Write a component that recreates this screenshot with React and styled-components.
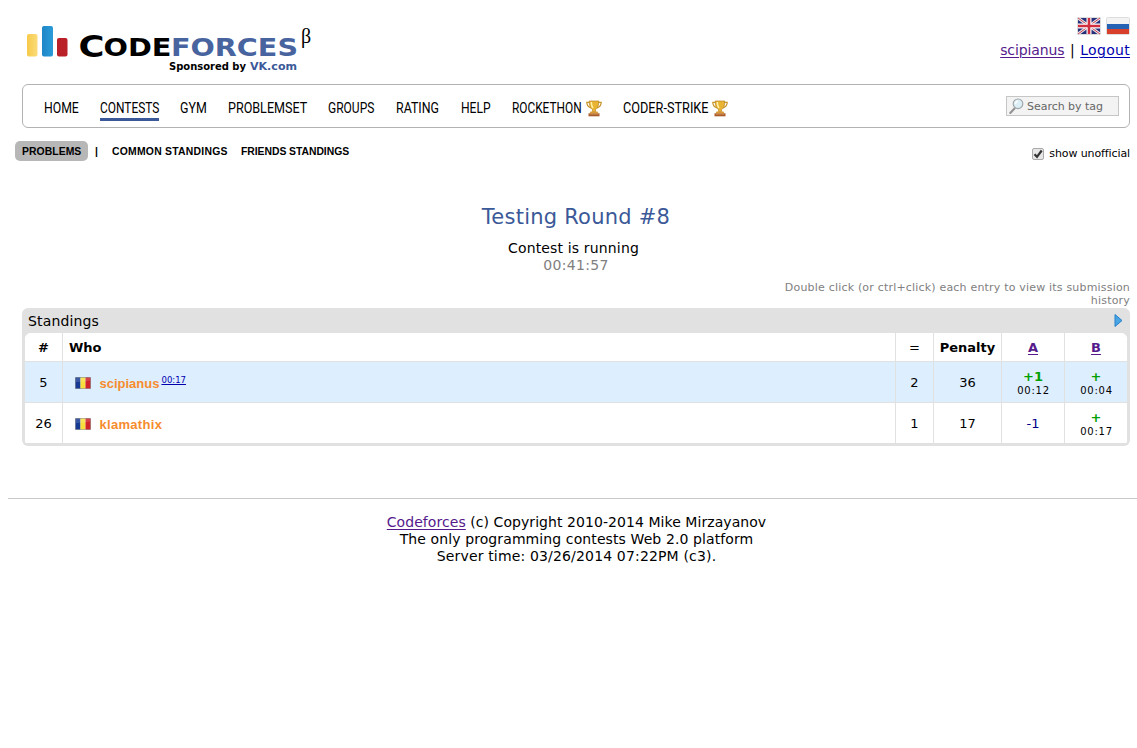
import React from "react";
import styled, { createGlobalStyle } from "styled-components";

const Global = createGlobalStyle`
  * { box-sizing: border-box; }
  body { margin: 0; background: #fff; color: #000; font: 14px/17px Verdana, "DejaVu Sans", sans-serif; overflow: hidden; }
`;
const Page = styled.div`width: 1137px; height: 748px; overflow: hidden;`;
const Header = styled.header`display: flex; justify-content: space-between; height: 84px; padding: 0 7px 0 22px;`;
const Account = styled.div`display: flex; flex-direction: column; align-items: flex-end; padding-top: 17px;`;
const Flags = styled.div`display: flex; gap: 5px; height: 25px;`;
const UserLinks = styled.div`display: flex; gap: 5.5px; white-space: pre;`;
const Link = styled.a`
  color: ${(p) => (p.$fresh ? "#0000b0" : "#551a8b")};
  text-decoration: underline; text-decoration-thickness: 1px; text-underline-offset: 2px;
  letter-spacing: ${(p) => p.$ls || 0}px;
`;
const Menu = styled.nav`
  display: flex; justify-content: space-between; height: 44px; margin: 0 7px 0 22px; padding: 11px 10px 0 21px;
  border: 1px solid #b2b2b2; border-radius: 6px;
`;
const MenuItems = styled.div`display: flex; gap: 21px; padding-top: 1px;`;
const MenuItem = styled.div`
  display: flex; justify-content: space-between; width: ${(p) => p.$w}px; height: 24px;
  border-bottom: ${(p) => (p.$active ? "3px solid #3b5998" : "0")};
`;
const MenuText = styled.span`
  display: block; width: 0; font: 15.5px/23px Roboto, sans-serif; white-space: nowrap;
  transform: scaleX(${(p) => p.$s}); transform-origin: 0 0;
`;
const Search = styled.div`
  display: flex; align-items: center; gap: 3px; width: 113px; height: 20px; padding-left: 2px;
  border: 1px solid #c6c6c6; background: #f3f3f3; color: #666; font-size: 11px; letter-spacing: -0.03px; white-space: nowrap;
`;
const SubBar = styled.div`display: flex; justify-content: space-between; height: 75px; padding: 13px 7px 0 15px;`;
const SubMenu = styled.div`display: flex; font: bold 10.4px/20px "Liberation Sans", Arial, sans-serif; white-space: nowrap;`;
const SubItem = styled.span`
  width: ${(p) => p.$w}px; height: 20px; padding: 1px 0 0 ${(p) => p.$pad || 0}px; border-radius: 5px;
  background: ${(p) => (p.$active ? "#b7b7b7" : "transparent")}; letter-spacing: ${(p) => p.$ls || 0}px;
`;
const Unofficial = styled.label`display: flex; gap: 5px; height: 24px; padding-top: 4px; font-size: 11px; letter-spacing: -0.11px; white-space: nowrap;`;
const CheckBox = styled.span`
  display: flex; width: 12px; height: 12px; margin-top: 3px; border: 1px solid #aaa; border-radius: 2px; background: #e6e6e6;
`;
const Contest = styled.section`height: 78px; margin-right: 7px; padding-left: 22px; text-align: center;`;
const Title = styled.h1`margin: 0 0 9px; font-size: 21px; line-height: 28px; font-weight: 400; color: #3b5998; letter-spacing: 0.23px;`;
const Status = styled.div`
  color: ${(p) => (p.$muted ? "#808080" : "#000")}; letter-spacing: ${(p) => p.$ls || 0}px;
  padding-right: ${(p) => (p.$muted ? 0 : 5)}px;
`;
const Hint = styled.div`
  width: 360px; height: 27px; margin: 0 7px 0 auto; color: #808080; text-align: right;
  font-size: 11px; line-height: 13px; letter-spacing: 0.19px;
`;
const Standings = styled.section`
  height: 138px; margin: 0 7px 0 22px; padding: 0 3px 3px; border-radius: 6px; background: #e1e1e1;
`;
const Caption = styled.div`display: flex; justify-content: space-between; height: 25px; padding: 5px 4px 0 3px; letter-spacing: 0.15px;`;
const Grid = styled.div`border-radius: 6px 6px 2px 2px; overflow: hidden; background: #fff;`;
const Row = styled.div`
  display: grid; grid-template-columns: 37px 833px 38px 68px 63px 1fr; height: ${(p) => p.$h}px;
  background: ${(p) => (p.$mine ? "#ddeeff" : "#fff")}; font-size: 13px;
  & + & { border-top: 1px solid #e1e1e1; }
`;
const Cell = styled.div`
  display: flex; flex-direction: ${(p) => (p.$stack ? "column" : "row")}; align-items: center;
  justify-content: ${(p) => (p.$left ? "flex-start" : "center")};
  padding: ${(p) => (p.$stack ? "2px" : "0")} 0 0 ${(p) => p.$left || 0}px; font-weight: ${(p) => (p.$bold ? 700 : 400)};
  color: ${(p) => p.$color || "#000"}; line-height: 15px;
  & + & { border-left: 1px solid #e1e1e1; }
`;
const Points = styled.b`height: 14px; color: #00a000; font-size: 13px; line-height: 14px;`;
const Time = styled.span`font-size: 10px; line-height: 13px; letter-spacing: 0.75px; padding-left: 1px;`;
const Handle = styled.b`
  margin: 2px 0 0 8.5px; color: #f68c2e; font: bold 13px/15px "Liberation Sans", Arial, sans-serif; letter-spacing: ${(p) => p.$ls}px;
`;
const VirtualTime = styled.a`margin: -4px 0 0 2px; color: #0000b0; font-size: 8.5px; line-height: 11px; text-decoration: underline; text-underline-offset: 1px;`;
const Footer = styled.footer`
  margin: 52px 0 0 8px; padding: 15px 0 0 8px; border-top: 1px solid #c8c8c8; text-align: center; white-space: nowrap;
`;
const FootLine = styled.div`letter-spacing: ${(p) => p.$ls || 0}px;`;

const Logo = () => (
  <svg width="300" height="84" viewBox="22 0 300 84">
    <defs>
      <linearGradient id="ly"><stop stopColor="#f7c948" /><stop offset="1" stopColor="#fbdc7a" /></linearGradient>
      <linearGradient id="lb"><stop stopColor="#1d86c7" /><stop offset="1" stopColor="#2b9bd8" /></linearGradient>
    </defs>
    <rect x="27" y="34" width="10.5" height="22.5" rx="2" fill="url(#ly)" />
    <rect x="42" y="26" width="11" height="30.5" rx="2" fill="url(#lb)" />
    <rect x="57" y="38" width="10.5" height="18.5" rx="2" fill="#b92027" />
    <g fontFamily="'DejaVu Sans', sans-serif" fontWeight="700">
      <text x="78.5" y="56.5" fontSize="30" textLength="26" lengthAdjust="spacingAndGlyphs">C</text>
      <text x="103.5" y="56.3" fontSize="25" textLength="68" lengthAdjust="spacingAndGlyphs">ODE</text>
      <text x="171" y="56.3" fontSize="25" textLength="127" lengthAdjust="spacingAndGlyphs" fill="#48649f">FORCES</text>
    </g>
    <text x="301" y="43" fontSize="20" fontFamily="'Liberation Serif', serif">β</text>
    <g fontFamily="'DejaVu Sans', sans-serif" fontWeight="700" fontSize="10.5">
      <text x="169" y="69.5" textLength="77" lengthAdjust="spacingAndGlyphs">Sponsored by</text>
      <text x="250" y="70" fontSize="11" textLength="47" lengthAdjust="spacingAndGlyphs" fill="#3b5998">VK.com</text>
    </g>
  </svg>
);
const Union = () => (
  <svg width="24" height="18" viewBox="0 0 24 18">
    <rect x=".5" y=".5" width="23" height="17" rx="1" fill="#26307a" stroke="#ddd" />
    <path d="M1 1L23 17M23 1L1 17" stroke="#e9e4ea" strokeWidth="2.8" />
    <path d="M1 1L23 17M23 1L1 17" stroke="#c8424d" strokeWidth="1" />
    <path d="M12 1v16M1 9h22" stroke="#fff" strokeWidth="5" />
    <path d="M12 1v16M1 9h22" stroke="#cf2f3e" strokeWidth="2.6" />
  </svg>
);
const Russia = () => (
  <svg width="24" height="18" viewBox="0 0 24 18">
    <rect x=".5" y=".5" width="23" height="17" rx="1" fill="#f3f3f3" stroke="#ddd" />
    <path d="M1 7h22v5H1z" fill="#2562b4" />
    <path d="M1 12h22v5H1z" fill="#d8402c" />
  </svg>
);
const FlagIcon = styled.svg`margin-top: 1px;`;
const Romania = () => (
  <FlagIcon width="16" height="12" viewBox="0 0 16 12">
    <path d="M.5.5h5v11h-5z" fill="#173a92" />
    <path d="M5.5.5h5v11h-5z" fill="#f8df3c" />
    <path d="M10.5.5h5v11h-5z" fill="#cf2229" />
    <path d="M1 1h14v2.5Q8 5 1 5z" fill="#fff" opacity=".15" />
    <rect x=".5" y=".5" width="15" height="11" fill="none" stroke="#333" strokeOpacity=".3" />
  </FlagIcon>
);
const Cup = styled.svg`margin-top: 3px;`;
const Trophy = () => (
  <Cup width="16" height="17" viewBox="0 0 16 17">
    <path d="M4 2.3H.8Q.8 6.5 5 8M12 2.3h3.2Q15.2 6.5 11 8" fill="none" stroke="#c9972d" strokeWidth="1.3" />
    <path d="M3.2 1h9.6q0 6.800-3.300 8.500v2.200h-3V9.500Q3.200 7.800 3.200 1z" fill="#e8b431" stroke="#b9832a" strokeWidth=".7" />
    <path d="M5.300 2q.1 4.500 1.700 6" fill="none" stroke="#fff0a6" strokeWidth="1.500" />
    <path d="M4.500 11.500h7l1 2h-9z" fill="#d99a33" />
    <path d="M2.500 13.300h11v3h-11z" fill="#a85a2a" />
    <path d="M3.500 14h9" stroke="#dda259" strokeWidth=".8" />
  </Cup>
);
const Glass = () => (
  <svg width="15" height="16" viewBox="0 0 15 16">
    <path d="M5.700 10.200L1.300 15" stroke="#929292" strokeWidth="2" strokeLinecap="round" />
    <circle cx="9" cy="5.800" r="4.800" fill="#dceef6" stroke="#a0a8ac" strokeWidth="1.200" />
    <path d="M6.500 6q.1-2.500 2.500-2.900" stroke="#fff" strokeWidth="1.400" fill="none" />
  </svg>
);

const MENU = [
  ["HOME", 35, 0.79], ["CONTESTS", 59, 0.77], ["GYM", 27, 0.8], ["PROBLEMSET", 79, 0.81],
  ["GROUPS", 47, 0.775], ["RATING", 44, 0.8], ["HELP", 30, 0.78],
  ["ROCKETHON", 90, 0.765, true], ["CODER-STRIKE", 105, 0.82, true],
];

export default function App() {
  return (
    <Page>
      <Global />
      <Header>
        <Logo />
        <Account>
          <Flags><Union /><Russia /></Flags>
          <UserLinks><Link $ls={-0.1}>scipianus</Link><span>|</span><Link $fresh $ls={0.3}>Logout</Link></UserLinks>
        </Account>
      </Header>
      <Menu>
        <MenuItems>
          {MENU.map(([name, w, s, cup]) => (
            <MenuItem key={name} $w={w} $active={name === "CONTESTS"}>
              <MenuText $s={s}>{name}</MenuText>{cup && <Trophy />}
            </MenuItem>
          ))}
        </MenuItems>
        <Search><Glass />Search by tag</Search>
      </Menu>
      <SubBar>
        <SubMenu>
          <SubItem $w={73} $pad={7} $ls={0.06} $active>PROBLEMS</SubItem>
          <SubItem $w={24} $pad={7}>|</SubItem>
          <SubItem $w={129} $ls={0.24}>COMMON STANDINGS</SubItem>
          <SubItem $w={110} $ls={-0.05}>FRIENDS STANDINGS</SubItem>
        </SubMenu>
        <Unofficial>
          <CheckBox><svg width="10" height="10" viewBox="0 0 10 10"><path d="M1.500 5.200L4 7.800L8.700 1.500" fill="none" stroke="#333" strokeWidth="2.200" /></svg></CheckBox>
          show unofficial
        </Unofficial>
      </SubBar>
      <Contest>
        <Title>Testing Round #8</Title>
        <Status $ls={0.15}>Contest is running</Status>
        <Status $muted $ls={0.35}>00:41:57</Status>
      </Contest>
      <Hint>Double click (or ctrl+click) each entry to view its submission history</Hint>
      <Standings>
        <Caption>
          Standings
          <svg width="9" height="14" viewBox="0 0 9 14"><path d="M1 1.500v12L8 7.500z" fill="#49a5e4" stroke="#2580c9" /></svg>
        </Caption>
        <Grid>
          <Row $h={28}>
            <Cell $bold>#</Cell><Cell $bold $left={6}>Who</Cell><Cell>=</Cell><Cell $bold>Penalty</Cell>
            <Cell $bold><Link>A</Link></Cell><Cell $bold><Link>B</Link></Cell>
          </Row>
          <Row $h={41} $mine>
            <Cell>5</Cell>
            <Cell $left={12}><Romania /><Handle $ls={0}>scipianus</Handle><VirtualTime>00:17</VirtualTime></Cell>
            <Cell>2</Cell><Cell>36</Cell>
            <Cell $stack><Points>+1</Points><Time>00:12</Time></Cell>
            <Cell $stack><Points>+</Points><Time>00:04</Time></Cell>
          </Row>
          <Row $h={41}>
            <Cell>26</Cell>
            <Cell $left={12}><Romania /><Handle $ls={0.3}>klamathix</Handle></Cell>
            <Cell>1</Cell><Cell>17</Cell><Cell $color="#00008b">-1</Cell>
            <Cell $stack><Points>+</Points><Time>00:17</Time></Cell>
          </Row>
        </Grid>
      </Standings>
      <Footer>
        <FootLine $ls={0.06}><Link $ls={0.06}>Codeforces</Link> (c) Copyright 2010-2014 Mike Mirzayanov</FootLine>
        <FootLine $ls={0.1}>The only programming contests Web 2.0 platform</FootLine>
        <FootLine $ls={0.16}>Server time: 03/26/2014 07:22PM (c3).</FootLine>
      </Footer>
    </Page>
  );
}
